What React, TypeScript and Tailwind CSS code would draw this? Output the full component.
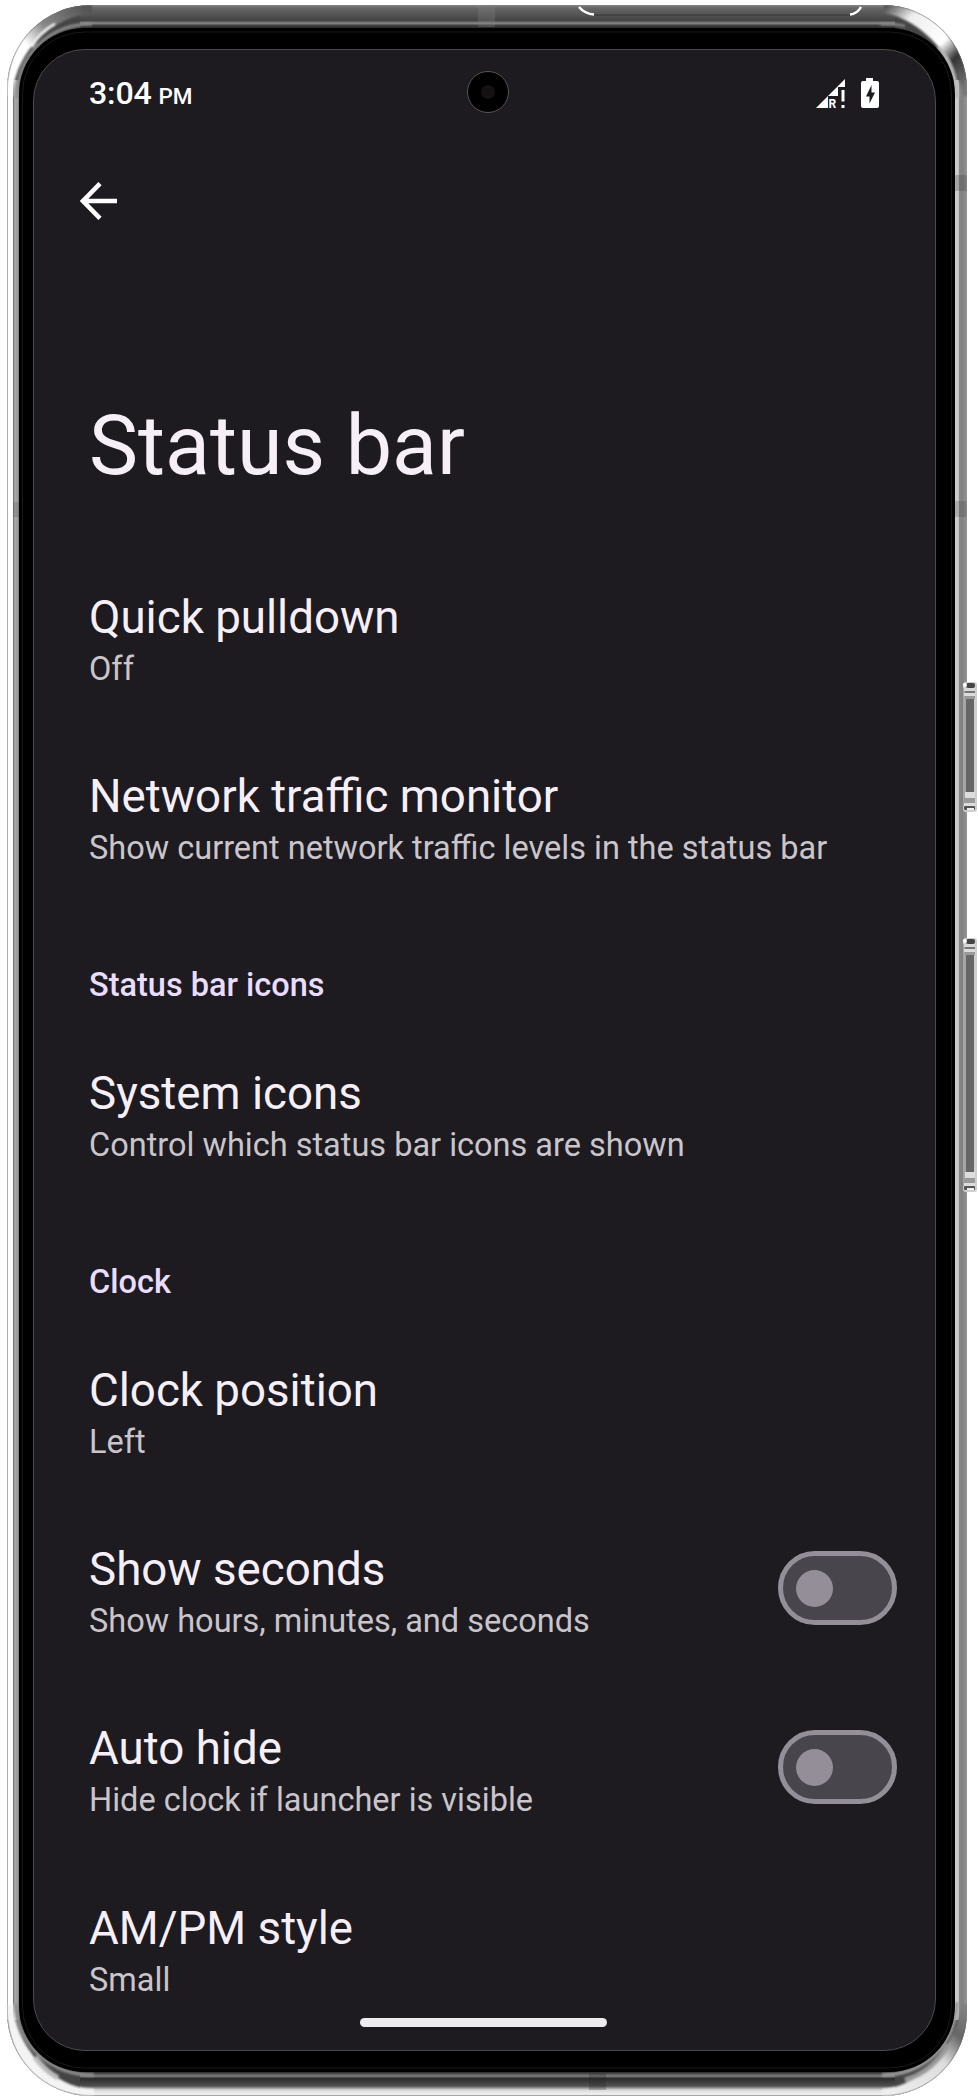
import React from "react";

type RowProps = { title: string; summary: string; toggle?: boolean };

function Row({ title, summary, toggle }: RowProps) {
  return (
    <div className="flex h-[179.3px] items-center justify-between pr-[38px]">
      <div className="flex flex-col whitespace-nowrap">
        <div className="text-[45.7px] leading-[52px] text-[#f6eff8]">{title}</div>
        <div className="pt-[2px] text-[32.5px] leading-[46px] text-[#c9c5cb]">{summary}</div>
      </div>
      {toggle && (
        <div className="mb-[12px] flex h-[74px] w-[119px] items-center rounded-full border-[5px] border-[#938e97] bg-[#49454c] pl-[13px]">
          <div className="size-[37px] rounded-full bg-[#938e97]" />
        </div>
      )}
    </div>
  );
}

function Heading({ children }: { children: string }) {
  return (
    <div className="flex h-[117.6px] items-end pb-[24px] text-[32.5px] leading-[38px] font-medium text-[#e9ddff]">
      {children}
    </div>
  );
}

function SideButton({ y, h }: { y: number; h: number }) {
  return (
    <g transform={`translate(963 ${y})`}>
      <rect x="0" y="0" width="14" height={h} rx="3" fill="#cfcfcf" />
      <rect x="0" y="6" width="3" height={h - 12} fill="#a5a5a5" />
      <rect x="3" y="14" width="8" height={h - 30} fill="#666" />
      <rect x="3" y="1" width="9" height="5" rx="2" fill="#444" />
      <rect x="0" y="1" width="4" height="4" rx="2" fill="#fff" />
      <rect x="1" y="6" width="11" height="3" fill="#d8d8d8" />
      <rect x="2" y="9" width="10" height="2" fill="#777" />
      <rect x="1" y="11" width="11" height="3" fill="#ddd" />
      <rect x="2" y="14" width="10" height="3" fill="#999" />
      <rect x="2" y={h - 20} width="10" height="6" fill="#ddd" />
      <rect x="1" y={h - 14} width="11" height="5" fill="#999" />
      <rect x="1" y={h - 9} width="11" height="3" fill="#ddd" />
      <rect x="1" y={h - 6} width="11" height="4" rx="1" fill="#555" />
      <rect x="4" y={h - 4} width="7" height="2" fill="#eee" />
    </g>
  );
}

function Frame() {
  return (
    <svg className="absolute inset-0" width="978" height="2100" viewBox="0 0 978 2100" fill="none">
      <defs>
        <linearGradient id="top" x1="0" y1="5" x2="0" y2="29" gradientUnits="userSpaceOnUse">
          <stop offset="0" stopColor="#8a8a8a" />
          <stop offset=".12" stopColor="#666" />
          <stop offset=".65" stopColor="#444" />
          <stop offset=".76" stopColor="#8a8a8a" />
          <stop offset=".86" stopColor="#3a3a3a" />
          <stop offset="1" stopColor="#222" />
        </linearGradient>
        <linearGradient id="bottom" x1="0" y1="2071" x2="0" y2="2096" gradientUnits="userSpaceOnUse">
          <stop offset="0" stopColor="#111" />
          <stop offset=".2" stopColor="#808080" />
          <stop offset=".3" stopColor="#2c2c2c" />
          <stop offset=".6" stopColor="#505050" />
          <stop offset=".76" stopColor="#d8d8d8" />
          <stop offset=".93" stopColor="#f2f2f2" />
          <stop offset="1" stopColor="#bbb" />
        </linearGradient>
        <linearGradient id="left" x1="7" y1="0" x2="20" y2="0" gradientUnits="userSpaceOnUse">
          <stop offset="0" stopColor="#bbb" />
          <stop offset=".1" stopColor="#fff" />
          <stop offset=".42" stopColor="#fff" />
          <stop offset=".5" stopColor="#777" />
          <stop offset=".6" stopColor="#aaa" />
          <stop offset=".85" stopColor="#999" />
          <stop offset="1" stopColor="#444" />
        </linearGradient>
        <linearGradient id="right" x1="955" y1="0" x2="967" y2="0" gradientUnits="userSpaceOnUse">
          <stop offset="0" stopColor="#ccc" />
          <stop offset=".28" stopColor="#ccc" />
          <stop offset=".36" stopColor="#888" />
          <stop offset=".6" stopColor="#808080" />
          <stop offset=".9" stopColor="#909090" />
          <stop offset="1" stopColor="#bbb" />
        </linearGradient>
        <linearGradient id="glintTL" x1="85" y1="8" x2="10" y2="80" gradientUnits="userSpaceOnUse">
          <stop offset="0" stopColor="#555" />
          <stop offset=".4" stopColor="#888" />
          <stop offset=".65" stopColor="#fff" />
          <stop offset="1" stopColor="#fff" />
        </linearGradient>
        <linearGradient id="glintTR" x1="885" y1="8" x2="964" y2="88" gradientUnits="userSpaceOnUse">
          <stop offset="0" stopColor="#555" />
          <stop offset=".22" stopColor="#eee" />
          <stop offset=".58" stopColor="#fff" />
          <stop offset=".75" stopColor="#333" />
          <stop offset="1" stopColor="#777" />
        </linearGradient>
        <linearGradient id="glintBR" x1="885" y1="2092" x2="964" y2="2010" gradientUnits="userSpaceOnUse">
          <stop offset="0" stopColor="#eee" />
          <stop offset=".55" stopColor="#ddd" />
          <stop offset=".8" stopColor="#666" />
          <stop offset="1" stopColor="#808080" />
        </linearGradient>
        <clipPath id="body">
          <rect x="7" y="5" width="960" height="2091" rx="84" />
        </clipPath>
        <filter id="soft" x="-20%" y="-20%" width="140%" height="140%">
          <feGaussianBlur stdDeviation="1.2" />
        </filter>
      </defs>
      <g clipPath="url(#body)">
        <rect width="978" height="2100" fill="#444" />
        <rect x="0" y="80" width="20" height="1940" fill="url(#left)" />
        <rect x="954" y="80" width="20" height="1940" fill="url(#right)" />
        <rect x="80" y="0" width="815" height="29" fill="url(#top)" />
        <rect x="80" y="2071" width="815" height="29" fill="url(#bottom)" />
        <g filter="url(#soft)">
          <path d="M6 96C6 40 40 4 92 4V14C50 16 14 55 13 96Z" fill="url(#glintTL)" />
          <path d="M17 98C17 57 47 24 92 24" stroke="#8c8c8c" strokeWidth="3" />
          <path d="M32 47Q40 32 55 24" stroke="#fff" strokeWidth="2" />
          <path d="M884 4C934 4 968 42 968 96H963C961 70 927 20 884 13Z" fill="url(#glintTR)" />
          <path d="M957 98C957 80 950 60 938 47" stroke="#bbb" strokeWidth="4" />
          <path d="M880 24Q898 24 905 26" stroke="#888" strokeWidth="2.500" />
          <path d="M6 2004C6 2062 40 2097 94 2097V2089C54 2089 15 2047 13 2004Z" fill="#f4f4f4" />
          <path d="M16 2004C18 2046 50 2075 94 2075" stroke="#8c8c8c" strokeWidth="3.500" />
          <path d="M35 2057Q44 2070 58 2078" stroke="#bbb" strokeWidth="5" />
          <path d="M968 2004C968 2062 934 2097 882 2097V2089C924 2086 954 2047 962 2004Z" fill="url(#glintBR)" />
          <path d="M957 2002C955 2045 924 2075 882 2075" stroke="#999" strokeWidth="3.500" />
          <path d="M905 2080Q932 2072 948 2045" stroke="#999" strokeWidth="5" />
        </g>
        <rect x="13" y="502" width="7" height="15" fill="#555" opacity=".25" />
        <rect x="955" y="175" width="12" height="16" fill="#333" opacity=".25" />
        <rect x="955" y="501" width="12" height="16" fill="#333" opacity=".2" />
        <rect x="589" y="2073" width="17" height="17" fill="#222" opacity=".25" />
      </g>
      <rect x="7.500" y="5.500" width="959" height="2090" rx="83.500" stroke="#777" strokeOpacity=".45" />
      <rect x="19" y="28" width="936" height="2044" rx="66" fill="#000" />
      <rect x="22.500" y="32" width="929" height="2036" rx="62" stroke="#191919" />
      <rect x="478" y="6" width="17" height="21" fill="#808080" opacity=".3" />
      <path d="M579 7Q585 14 594 14.500M850 14.500Q857 14 861 7" stroke="#fff" strokeWidth="2.500" />
      <path d="M594 15H850" stroke="#333" />
      <SideButton y={682} h={130} />
      <SideButton y={938} h={254} />
    </svg>
  );
}

export default function App() {
  return (
    <div className="relative flex h-[2100px] w-[978px] bg-white font-['Roboto',sans-serif]">
      <Frame />
      <main className="relative mt-[49px] ml-[33px] flex h-[2002px] w-[903px] flex-col overflow-hidden rounded-[52px] border border-[#4a494c] bg-[#1d1a20] pl-[55px]">
        <header className="flex h-[85px] shrink-0 items-center justify-between pr-[55px] text-white">
          <div className="pt-px text-[32.2px] font-medium tracking-[-0.2px]">
            3:04<span className="ml-[7px] text-[22.5px]">PM</span>
          </div>
          <svg className="mt-[2px] overflow-visible" width="64" height="34" viewBox="0 -1 64 34" fill="white">
            <path d="M0 30L29 1V9H22V18H12V30Z" />
            <path d="M12 19H21V30H12Z" fill="#1d1a20" />
            <text x="12.500" y="30" fontSize="12" fontWeight="700">R</text>
            <path d="M25.500 12h3v11.500h-3zM25.500 27h3v3h-3z" />
            <path d="M50 0h7v3h4q2 0 2 2v23q0 2-2 2H47q-2 0-2-2V5q0-2 2-2h3z" />
            <path d="M55.500 7L50 18.500h3.500v7l5.500-11h-3.500z" fill="#1d1a20" />
          </svg>
        </header>
        <svg className="mt-[47px] ml-[-9px] shrink-0" width="37" height="38" viewBox="0 0 37 38" fill="none" stroke="white" strokeWidth="4.500">
          <path d="M37 19H3M20 1.600L3 19L20 36.400" />
        </svg>
        <h1 className="mt-[177px] shrink-0 text-[82.6px] leading-[98px] text-[#f6eff8]">Status bar</h1>
        <section className="mt-[57px] flex flex-col whitespace-nowrap">
          <Row title="Quick pulldown" summary="Off" />
          <Row title="Network traffic monitor" summary="Show current network traffic levels in the status bar" />
          <Heading>Status bar icons</Heading>
          <Row title="System icons" summary="Control which status bar icons are shown" />
          <Heading>Clock</Heading>
          <Row title="Clock position" summary="Left" />
          <Row title="Show seconds" summary="Show hours, minutes, and seconds" toggle />
          <Row title="Auto hide" summary="Hide clock if launcher is visible" toggle />
          <Row title="AM/PM style" summary="Small" />
        </section>
        <div className="absolute top-[1968px] left-[326px] h-[9px] w-[247px] rounded-full bg-[#eeecee]" />
        <div className="absolute top-[21px] left-[433px] flex size-[42px] items-center justify-center rounded-full border border-[#555] bg-black">
          <div className="size-[14px] rounded-full bg-[#151214]" />
        </div>
      </main>
    </div>
  );
}
